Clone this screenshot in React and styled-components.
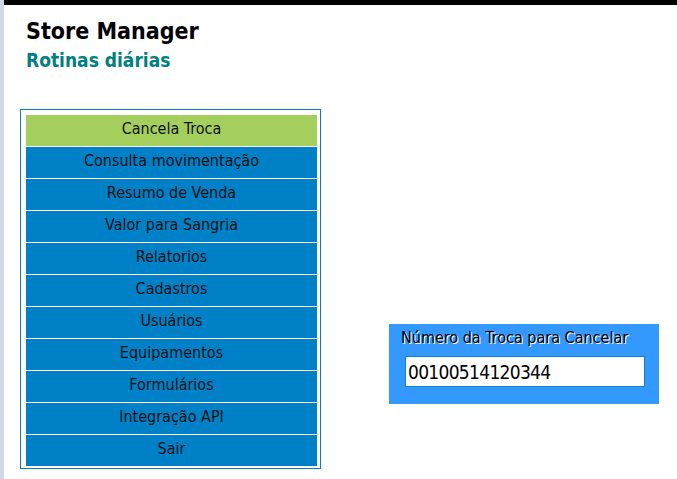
import React from "react";
import styled, { createGlobalStyle } from "styled-components";

const Global = createGlobalStyle`
  html, body { margin: 0; padding: 0; background: #ffffff; }
  body { font-family: "DejaVu Sans Condensed", "DejaVu Sans", sans-serif; font-stretch: condensed; }
`;

const Page = styled.div`
  min-height: 479px;
  border-left: 4px solid #d0d8e8;
  box-sizing: border-box;
`;

const TopBar = styled.div`
  height: 5px;
  background: #000000;
`;

const Header = styled.header`
  padding: 12px 0 0 22px;
`;

const Title = styled.h1`
  margin: 0;
  font-size: 23px;
  line-height: 28px;
  font-weight: bold;
  color: #000;
`;

const Subtitle = styled.h2`
  margin: 4px 0 0;
  font-size: 19px;
  line-height: 22px;
  font-weight: bold;
  color: #008080;
`;

const Content = styled.div`
  display: flex;
  align-items: flex-start;
  padding: 38px 0 0 16px;
  gap: 68px;
`;

const MenuBox = styled.nav`
  width: 301px;
  box-sizing: border-box;
  border: 1px solid #0a7cc0;
  padding: 5px 3px 2px 5px;
  display: flex;
  flex-direction: column;
  gap: 1px;
`;

const MenuItem = styled.div`
  height: 31px;
  box-sizing: border-box;
  padding-bottom: 3px;
  line-height: 28px;
  text-align: center;
  font-size: 16px;
  color: #111;
  background: ${(p) => (p.$active ? "#a4cf5c" : "#0080c6")};
`;

const Panel = styled.div`
  margin-top: 215px;
  width: 270px;
  height: 80px;
  box-sizing: border-box;
  background: #3399ff;
  padding: 5px 0 0 12px;
`;

const Label = styled.div`
  font-size: 16px;
  line-height: 18px;
  color: #000;
  text-shadow: 1px 1px 0 #ffffff;
`;

const Input = styled.input`
  display: block;
  margin: 9px 0 0 4px;
  width: 240px;
  height: 31px;
  box-sizing: border-box;
  border: 1px solid #0a86c8;
  outline: none;
  padding: 0 2px;
  font-family: "DejaVu Sans Condensed", "DejaVu Sans", sans-serif;
  font-stretch: condensed;
  font-size: 19px;
  letter-spacing: -0.7px;
  color: #000;
  background: #fff;
`;

const items = [
  "Cancela Troca",
  "Consulta movimentação",
  "Resumo de Venda",
  "Valor para Sangria",
  "Relatorios",
  "Cadastros",
  "Usuários",
  "Equipamentos",
  "Formulários",
  "Integração API",
  "Sair",
];

export default function App() {
  return (
    <>
      <Global />
      <Page>
        <TopBar />
        <Header>
          <Title>Store Manager</Title>
          <Subtitle>Rotinas diárias</Subtitle>
        </Header>
        <Content>
          <MenuBox>
            {items.map((t, i) => (
              <MenuItem key={t} $active={i === 0}>
                {t}
              </MenuItem>
            ))}
          </MenuBox>
          <Panel>
            <Label>Número da Troca para Cancelar</Label>
            <Input defaultValue="00100514120344" />
          </Panel>
        </Content>
      </Page>
    </>
  );
}
